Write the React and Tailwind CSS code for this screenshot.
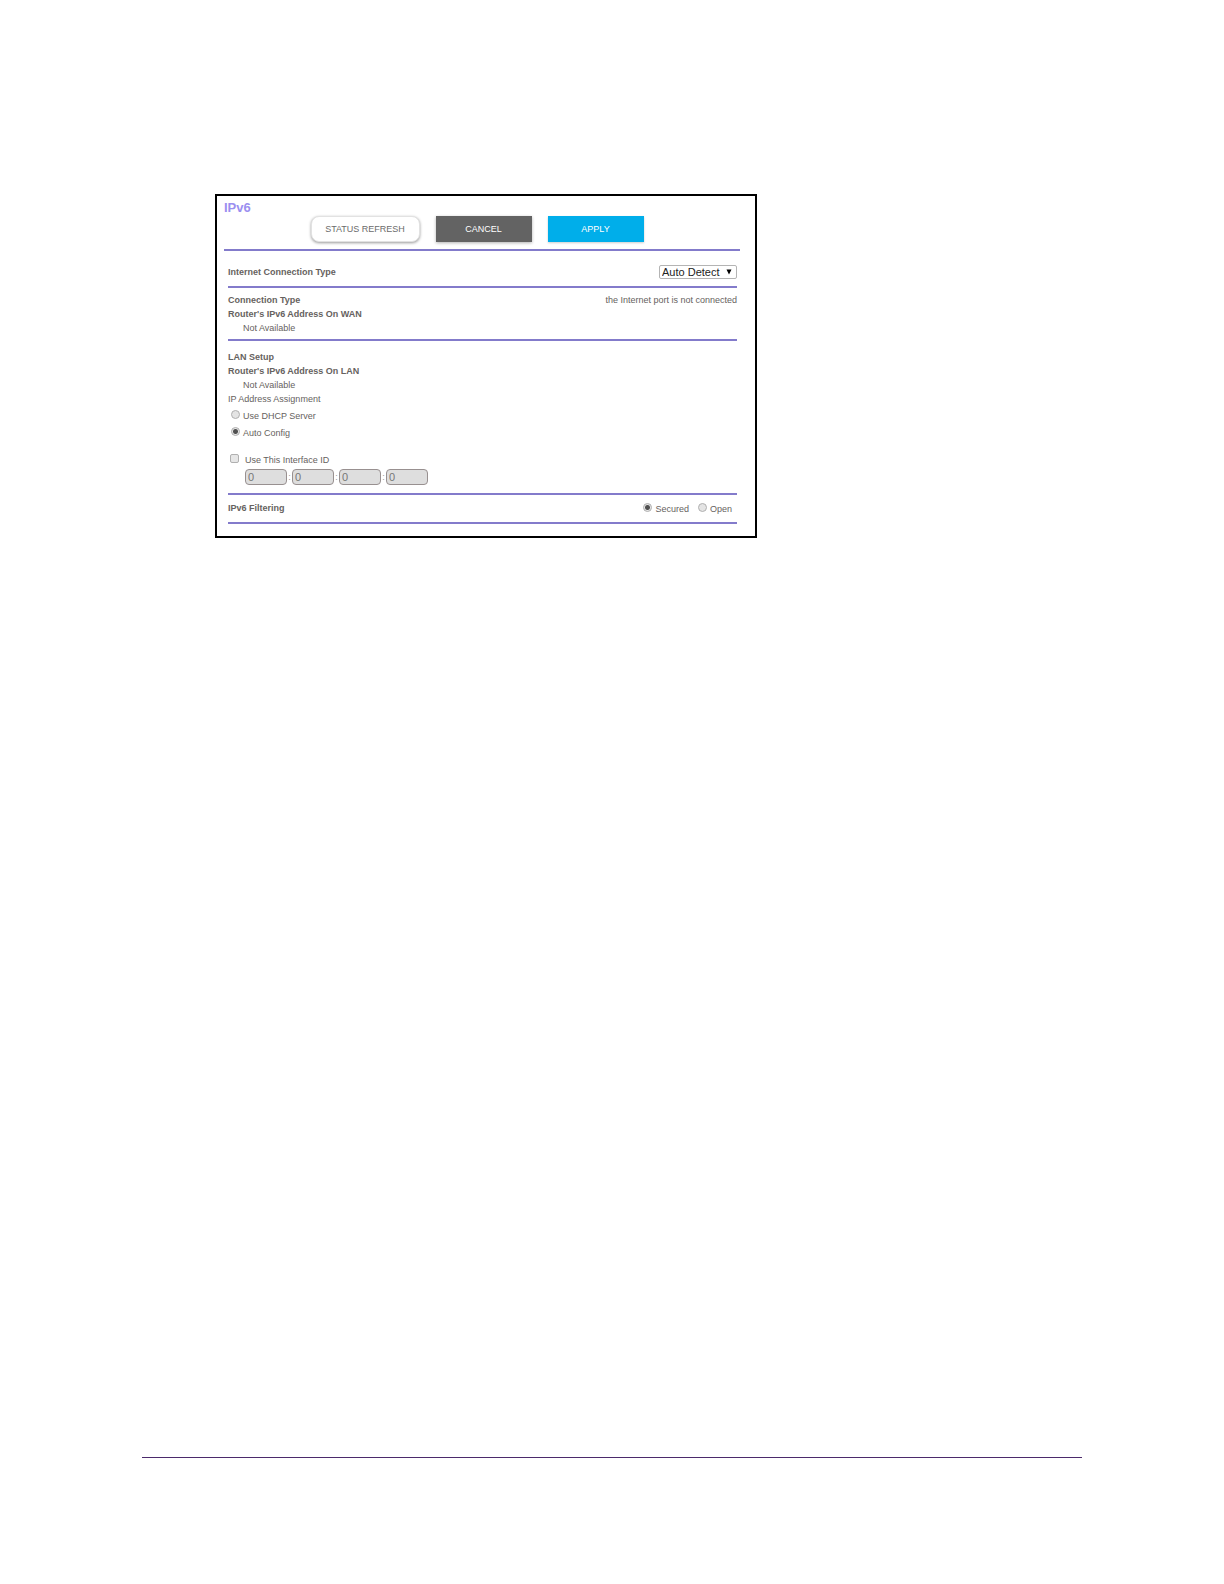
import { useState } from "react";

const radioClass =
  "size-[9px] shrink-0 appearance-none rounded-full border border-[#b0b0b0] bg-[#e4e4e4] checked:bg-[radial-gradient(circle,#505050_0_2px,#e6e6e6_3px)]";

function Rule() {
  return <hr className="h-[2px] border-0 bg-[#837bcb]" />;
}

function Radio({ name, label, checked, onChange, className }) {
  return (
    <label className={`flex items-center gap-[3px] ${className}`}>
      <input
        type="radio"
        name={name}
        checked={checked}
        onChange={onChange}
        className={`mb-[3px] ${radioClass}`}
      />
      {label}
    </label>
  );
}

function Toolbar() {
  return (
    <div className="flex justify-center gap-4 pr-[10px]">
      <button
        type="button"
        className="h-[26px] w-[109px] rounded-lg border border-[#e2e2e2] bg-white text-[#6b6b6b] shadow-[0_1px_3px_rgba(0,0,0,0.4)]"
      >
        STATUS REFRESH
      </button>
      <button
        type="button"
        className="h-[26px] w-24 bg-[#636363] text-white shadow-[0_1px_3px_rgba(0,0,0,0.3)]"
      >
        CANCEL
      </button>
      <button
        type="button"
        className="h-[26px] w-24 bg-[#00aeea] text-white shadow-[0_1px_2px_rgba(0,0,0,0.2)]"
      >
        APPLY
      </button>
    </div>
  );
}

function InterfaceId() {
  const [enabled, setEnabled] = useState(false);
  const [parts, setParts] = useState(["0", "0", "0", "0"]);

  function updatePart(index, value) {
    setParts(parts.map((part, i) => (i === index ? value : part)));
  }

  return (
    <div className="pt-3">
      <label className="flex items-center gap-[6px] pl-[2px]">
        <input
          type="checkbox"
          checked={enabled}
          onChange={(e) => setEnabled(e.target.checked)}
          className="mb-[3px] size-[9px] shrink-0 appearance-none rounded-xs border border-[#b0b0b0] bg-[#e6e6e6] checked:bg-[#505050]"
        />
        Use This Interface ID
      </label>
      <div className="mt-[2px] flex pl-[17px]">
        {parts.map((part, i) => (
          <div key={i} className="flex items-center">
            {i > 0 && <span className="w-[5px] text-center text-[#999999]">:</span>}
            <input
              type="text"
              aria-label={`Interface ID part ${i + 1}`}
              value={part}
              disabled={!enabled}
              onChange={(e) => updatePart(i, e.target.value)}
              className="h-4 w-[42px] rounded-sm border border-[#989090] bg-[#dedede] px-[2px] text-[11px] text-[#777777]"
            />
          </div>
        ))}
      </div>
    </div>
  );
}

function Ipv6Panel() {
  const [assignment, setAssignment] = useState("auto");
  const [filtering, setFiltering] = useState("secured");

  return (
    <form
      onSubmit={(e) => e.preventDefault()}
      className="w-full max-w-[542px] border-2 border-black bg-white pt-1 pr-[15px] pb-3 pl-[7px] text-[9px] leading-[14px] text-[#666260]"
    >
      <h1 className="text-[13px] leading-4 font-bold text-[#9b8ff0]">IPv6</h1>
      <Toolbar />
      <div className="mt-[7px]">
        <Rule />
      </div>

      <div className="pr-[3px] pl-1">
        <div className="flex items-center justify-between pt-[14px] pb-[7px]">
          <label htmlFor="connection" className="font-bold">
            Internet Connection Type
          </label>
          <div className="relative">
            <select
              id="connection"
              className="block h-[14px] w-[78px] appearance-none rounded-xs border border-[#b4b4b4] bg-white pl-[2px] text-[11px] leading-3 text-[#222222]"
            >
              <option>Auto Detect</option>
            </select>
            <svg
              viewBox="0 0 6 6"
              className="pointer-events-none absolute top-1 right-[5px] size-[6px] fill-black"
            >
              <path d="M0.5 0.5h5L3 5.5z" />
            </svg>
          </div>
        </div>
        <Rule />

        <section className="pt-[5px] pb-1">
          <div className="flex justify-between">
            <h2 className="font-bold">Connection Type</h2>
            <p>the Internet port is not connected</p>
          </div>
          <h2 className="font-bold">Router's IPv6 Address On WAN</h2>
          <p className="pl-[15px]">Not Available</p>
        </section>
        <Rule />

        <section className="pt-[9px] pb-2">
          <h2 className="font-bold">LAN Setup</h2>
          <h2 className="font-bold">Router's IPv6 Address On LAN</h2>
          <p className="pl-[15px]">Not Available</p>
          <p>IP Address Assignment</p>
          <div className="pt-px pl-[3px]">
            <Radio
              name="assignment"
              label="Use DHCP Server"
              checked={assignment === "dhcp"}
              onChange={() => setAssignment("dhcp")}
              className="h-[17px]"
            />
            <Radio
              name="assignment"
              label="Auto Config"
              checked={assignment === "auto"}
              onChange={() => setAssignment("auto")}
              className="h-[17px]"
            />
          </div>
          <InterfaceId />
        </section>
        <Rule />

        <section className="flex items-start justify-between pt-[6px] pb-[5px]">
          <h2 className="font-bold">IPv6 Filtering</h2>
          <div className="flex gap-[9px] pr-[5px]">
            <Radio
              name="filtering"
              label="Secured"
              checked={filtering === "secured"}
              onChange={() => setFiltering("secured")}
              className="h-4"
            />
            <Radio
              name="filtering"
              label="Open"
              checked={filtering === "open"}
              onChange={() => setFiltering("open")}
              className="h-4"
            />
          </div>
        </section>
        <Rule />
      </div>
    </form>
  );
}

export default function App() {
  return (
    <div className="flex min-h-screen flex-col bg-white px-[142px] pt-[194px] pb-[126px] font-['Liberation_Sans',Arial,sans-serif]">
      <main className="pl-[73px]">
        <Ipv6Panel />
      </main>
      <footer className="mt-auto border-t border-[#4b2a6b]" />
    </div>
  );
}
